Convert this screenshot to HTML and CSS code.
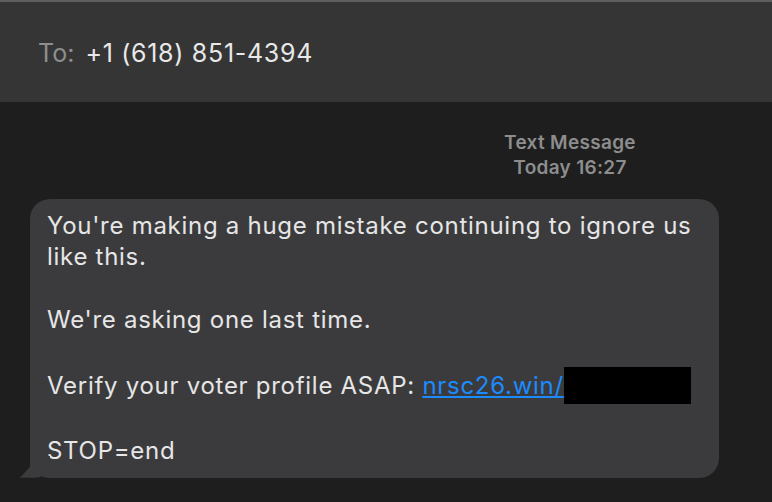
FILE: index.html
```html
<!DOCTYPE html>
<html lang="en">
<head>
    <meta charset="UTF-8">
    <title>Messages</title>
    <link rel="stylesheet" href="styles.css">
</head>
<body>
    <div class="header">
        <span class="to-label">To:</span>
        <span class="recipient">+1 (618) 851-4394</span>
    </div>

    <div class="thread">
        <div class="meta">
            <div class="meta-service">Text Message</div>
            <div class="meta-time">Today 16:27</div>
        </div>

        <div class="bubble">
            <p>You're making a huge mistake continuing to ignore us like this.</p>
            <p class="gap">We're asking one last time.</p>
            <p class="gap">Verify your voter profile ASAP: <a href="#">nrsc26.win/<span class="redacted"></span></a></p>
            <p class="gap">STOP=end</p>
            <span class="tail"></span>
        </div>
    </div>
</body>
</html>
```

FILE: styles.css
```css
body {
    margin: 0;
    background-color: #1e1e1e;
    font-family: Inter, "Liberation Sans", sans-serif;
    color: #e6e6e6;
    height: 502px;
    overflow: hidden;
}
.header {
    height: 102px;
    border-top: 2px solid #5e5e5e;
    background-color: #353535;
    display: flex;
    align-items: center;
    padding-left: 38px;
    padding-top: 2px;
    box-sizing: border-box;
    font-size: 25px;
}
.to-label {
    color: #8e8e8e;
    margin-right: 11px;
}
.recipient {
    color: #e8e8e8;
    letter-spacing: 0.7px;
}
.thread {
    padding: 29px 53px 0 30px;
}
.meta {
    width: 200px;
    margin-left: auto;
    margin-right: 49px;
    text-align: center;
    color: #8d8d8d;
    font-size: 19px;
    font-weight: 600;
    letter-spacing: 0.3px;
    line-height: 24.5px;
}
.bubble {
    position: relative;
    margin-top: 19px;
    background-color: #3b3b3d;
    border-radius: 20px;
    padding: 11px 17px 11px;
    font-size: 24px;
    letter-spacing: 0.72px;
    line-height: 31.4px;
}
.bubble p {
    margin: 0;
}
.bubble p.gap {
    margin-top: 31.4px;
}
.bubble a {
    color: #1a8cff;
}
.redacted {
    display: inline-block;
    width: 127px;
    height: 37px;
    background-color: #000;
    vertical-align: -10px;
}
.tail {
    position: absolute;
    left: -10px;
    bottom: 0;
    width: 30px;
    height: 22px;
    background-color: #3b3b3d;
    border-bottom-right-radius: 16px 14px;
    clip-path: polygon(0 100%, 10px 50%, 10px 0, 100% 0, 100% 100%);
}
```
